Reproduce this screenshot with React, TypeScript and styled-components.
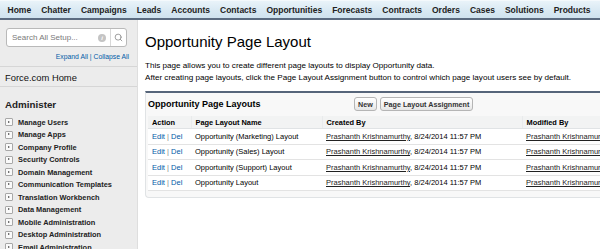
import React from "react";
import styled, { createGlobalStyle } from "styled-components";
import { Search } from "lucide-react";

const tabs = [
  "Home",
  "Chatter",
  "Campaigns",
  "Leads",
  "Accounts",
  "Contacts",
  "Opportunities",
  "Forecasts",
  "Contracts",
  "Orders",
  "Cases",
  "Solutions",
  "Products",
];

const setupItems = [
  "Manage Users",
  "Manage Apps",
  "Company Profile",
  "Security Controls",
  "Domain Management",
  "Communication Templates",
  "Translation Workbench",
  "Data Management",
  "Mobile Administration",
  "Desktop Administration",
  "Email Administration",
];

const layouts = [
  "Opportunity (Marketing) Layout",
  "Opportunity (Sales) Layout",
  "Opportunity (Support) Layout",
  "Opportunity Layout",
];

const GlobalStyle = createGlobalStyle`
  html, body {
    margin: 0;
    padding: 0;
    width: 600px;
    height: 249px;
    overflow: hidden;
    background: #ffffff;
    font-family: "Liberation Sans", Arial, sans-serif;
  }
`;

const App = () => {
  return (
    <Page>
      <GlobalStyle />
      <TabBar>
        {tabs.map((t) => (
          <Tab key={t}>{t}</Tab>
        ))}
      </TabBar>
      <Body>
        <Sidebar>
          <SearchBox>
            <SearchText>Search All Setup...</SearchText>
            <InfoIcon>i</InfoIcon>
            <SearchButton>
              <Search size={9} strokeWidth={2.2} color="#8a8a8a" />
            </SearchButton>
          </SearchBox>
          <ExpandLinks>
            <a>Expand All</a> | <a>Collapse All</a>
          </ExpandLinks>
          <HomeLink>Force.com Home</HomeLink>
          <SectionTitle>Administer</SectionTitle>
          <NavList>
            {setupItems.map((item) => (
              <NavItem key={item}>
                <Toggle />
                {item}
              </NavItem>
            ))}
          </NavList>
        </Sidebar>
        <Main>
          <Title>Opportunity Page Layout</Title>
          <Intro>
            This page allows you to create different page layouts to display
            Opportunity data.
            <br />
            After creating page layouts, click the Page Layout Assignment button
            to control which page layout users see by default.
          </Intro>
          <Block>
            <BlockHeader>
              <BlockTitle>Opportunity Page Layouts</BlockTitle>
              <Buttons>
                <Btn>New</Btn>
                <Btn>Page Layout Assignment</Btn>
              </Buttons>
            </BlockHeader>
            <Table>
              <colgroup>
                <col style={{ width: 43 }} />
                <col style={{ width: 131 }} />
                <col style={{ width: 200 }} />
                <col style={{ width: 200 }} />
              </colgroup>
              <thead>
                <tr>
                  <Th>Action</Th>
                  <Th>Page Layout Name</Th>
                  <Th>Created By</Th>
                  <Th>Modified By</Th>
                </tr>
              </thead>
              <tbody>
                {layouts.map((name) => (
                  <tr key={name}>
                    <Td>
                      <ActionLink>Edit</ActionLink>
                      <Pipe> | </Pipe>
                      <ActionLink>Del</ActionLink>
                    </Td>
                    <Td>{name}</Td>
                    <Td>
                      <UserLink>Prashanth Krishnamurthy</UserLink>, 8/24/2014
                      11:57 PM
                    </Td>
                    <Td>
                      <UserLink>Prashanth Krishnamurthy</UserLink>, 8/24/2014
                      11:57 PM
                    </Td>
                  </tr>
                ))}
              </tbody>
            </Table>
          </Block>
        </Main>
      </Body>
    </Page>
  );
};

const Page = styled.div`
  width: 600px;
  height: 249px;
  overflow: hidden;
`;

const TabBar = styled.div`
  display: flex;
  align-items: center;
  padding-left: 2.5px;
  background: linear-gradient(180deg, #e9f3f9 0%, #d9e9f3 55%, #cfe2ee 100%);
  border-top: 1px solid #f4f9fc;
  border-bottom: 2px solid #5b6b80;
  box-sizing: border-box;
  height: 20px;
  white-space: nowrap;
`;

const Tab = styled.div`
  font-size: 8.5px;
  font-weight: bold;
  color: #222;
  padding: 0 5px;
`;

const Body = styled.div`
  display: flex;
  height: 229px;
`;

const Sidebar = styled.div`
  width: 138px;
  flex: 0 0 138px;
  background: #ececec;
  border-right: 1px solid #dedede;
  display: flex;
  flex-direction: column;
  padding-top: 8px;
  box-sizing: border-box;
  overflow: hidden;
`;

const SearchBox = styled.div`
  margin-left: 6px;
  width: 121px;
  height: 19px;
  flex: 0 0 19px;
  box-sizing: border-box;
  background: #fff;
  border: 1px solid #b9b9b9;
  border-radius: 3px;
  display: flex;
  align-items: center;
`;

const SearchText = styled.span`
  flex: 1;
  padding-left: 5px;
  font-size: 8px;
  color: #7a7a7a;
`;

const InfoIcon = styled.span`
  width: 8px;
  height: 8px;
  border-radius: 50%;
  background: #c4c4c4;
  color: #fff;
  font-size: 6px;
  font-weight: bold;
  font-style: italic;
  display: flex;
  align-items: center;
  justify-content: center;
  margin-right: 4px;
`;

const SearchButton = styled.span`
  width: 15px;
  height: 100%;
  border-left: 1px solid #d8d8d8;
  display: flex;
  align-items: center;
  justify-content: center;
`;

const ExpandLinks = styled.div`
  text-align: right;
  padding-right: 8px;
  margin-top: 6px;
  font-size: 6.8px;
  color: #015ba7;
  line-height: 8px;
  a {
    color: #015ba7;
  }
`;

const HomeLink = styled.div`
  margin-top: 5px;
  border-top: 1px solid #d6d6d6;
  border-bottom: 1px solid #d6d6d6;
  padding: 5px 0 3px 5px;
  font-size: 9.4px;
  color: #111;
  line-height: 11px;
`;

const SectionTitle = styled.div`
  padding: 12px 0 0 5px;
  font-size: 9.8px;
  font-weight: bold;
  color: #222;
  line-height: 12px;
`;

const NavList = styled.div`
  display: flex;
  flex-direction: column;
  padding: 5px 0 0 5px;
`;

const NavItem = styled.div`
  display: flex;
  align-items: center;
  height: 12.5px;
  flex: 0 0 12.5px;
  font-size: 7.4px;
  font-weight: bold;
  color: #222;
  white-space: nowrap;
`;

const Toggle = styled.span`
  width: 6px;
  height: 6px;
  border: 1px solid #a8a8a8;
  border-radius: 1px;
  background: #fafafa;
  margin-right: 5px;
  position: relative;
  &::after {
    content: "";
    position: absolute;
    left: 2px;
    top: 1.5px;
    border-left: 2px solid #444;
    border-top: 1.5px solid transparent;
    border-bottom: 1.5px solid transparent;
  }
`;

const Main = styled.div`
  flex: 1;
  min-width: 0;
  overflow: hidden;
  padding: 13px 0 0 7px;
`;

const Title = styled.h1`
  margin: 0;
  font-size: 15px;
  font-weight: normal;
  color: #000;
  line-height: 18px;
  white-space: nowrap;
`;

const Intro = styled.p`
  margin: 9px 0 0 0;
  font-size: 8.1px;
  line-height: 12px;
  color: #000;
  white-space: nowrap;
`;

const Block = styled.div`
  margin-top: 7px;
  width: 600px;
  background: #f8f8f8;
  border-top: 2px solid #56657a;
  border-left: 1px solid #e0e3e5;
  border-bottom: 1px solid #e0e3e5;
  border-bottom-left-radius: 4px;
  padding: 0 0 6px 2px;
`;

const BlockHeader = styled.div`
  height: 22px;
  display: flex;
  align-items: center;
`;

const BlockTitle = styled.div`
  width: 206px;
  font-size: 9px;
  font-weight: bold;
  color: #000;
  white-space: nowrap;
`;

const Buttons = styled.div`
  display: flex;
  gap: 3px;
`;

const Btn = styled.button`
  height: 14px;
  padding: 0 3px;
  font-family: "Liberation Sans", Arial, sans-serif;
  font-size: 7.2px;
  font-weight: bold;
  color: #333;
  background: linear-gradient(180deg, #ffffff 0%, #f4f4f4 50%, #e6e6e6 100%);
  border: 1px solid #b5b5b5;
  border-radius: 3px;
  white-space: nowrap;
`;

const Table = styled.table`
  border-collapse: collapse;
  table-layout: fixed;
  width: 574px;
  background: #fff;
  margin-top: 1px;
`;

const Th = styled.th`
  height: 12px;
  padding: 0 0 0 4px;
  text-align: left;
  font-size: 7.4px;
  font-weight: bold;
  color: #000;
  background: #f2f3f3;
  border-bottom: 1px solid #e0e3e5;
  border-left: 1px solid #e9ebec;
  white-space: nowrap;
  &:first-child {
    border-left: none;
  }
`;

const Td = styled.td`
  height: 14.5px;
  padding: 0 0 0 4px;
  font-size: 7.5px;
  color: #000;
  border-bottom: 1px solid #e3e3e3;
  white-space: nowrap;
  overflow: hidden;
`;

const ActionLink = styled.a`
  color: #015ba7;
`;

const Pipe = styled.span`
  color: #888;
`;

const UserLink = styled.a`
  color: #222;
  text-decoration: underline;
`;

export default App;
